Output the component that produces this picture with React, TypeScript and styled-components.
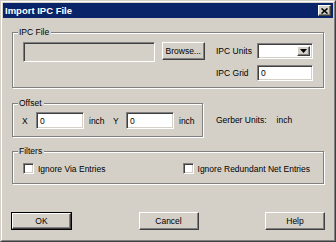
import styled, { createGlobalStyle } from "styled-components";

const GlobalStyle = createGlobalStyle`
  html, body {
    margin: 0;
    padding: 0;
    background: #d4d0c8;
  }

  body {
    font-family: "Liberation Sans", Arial, sans-serif;
    font-size: 8.5px;
    color: #000;
  }
`;

const face = "#d4d0c8";

const Window = styled.div`
  box-sizing: border-box;
  width: 336px;
  height: 242px;
  background: ${face};
  border: 1px solid;
  border-color: ${face} #404040 #404040 ${face};
`;

const Frame = styled.div`
  box-sizing: border-box;
  height: 100%;
  border: 1px solid;
  border-color: #fff #808080 #808080 #fff;
  padding: 1px;
  display: flex;
  flex-direction: column;
`;

const TitleBar = styled.div`
  height: 15px;
  background: #0a246a;
  display: flex;
  align-items: center;
  justify-content: space-between;
  padding: 0 2px 0 2px;
`;

const Title = styled.span`
  color: #fff;
  font-weight: bold;
  font-size: 9.5px;
  line-height: 15px;
`;

const CloseButton = styled.div`
  box-sizing: border-box;
  width: 13px;
  height: 11px;
  background: ${face};
  border: 1px solid;
  border-color: #fff #404040 #404040 #fff;
  box-shadow: inset -1px -1px 0 #808080;
  display: flex;
  align-items: center;
  justify-content: center;

  svg {
    display: block;
  }
`;

const Body = styled.div`
  flex: 1;
  padding: 14px 9px 0 9px;
  display: flex;
  flex-direction: column;
`;

const GroupBox = styled.div<{ $width?: number }>`
  position: relative;
  box-sizing: border-box;
  width: ${({ $width }) => ($width ? `${$width}px` : "auto")};
  border: 1px solid #808080;
  box-shadow: inset 1px 1px 0 #fff, 1px 1px 0 #fff;
`;

const Legend = styled.span`
  position: absolute;
  top: -6px;
  left: 5px;
  padding: 0 2px 0 1px;
  background: ${face};
  line-height: 11px;
`;

const FileGroup = styled(GroupBox)`
  display: flex;
  align-items: flex-start;
  padding: 9px 10px 6px 10px;
`;

const Sunken = styled.div<{ $disabled?: boolean }>`
  box-sizing: border-box;
  background: ${({ $disabled }) => ($disabled ? face : "#fff")};
  border: 1px solid;
  border-color: #808080 #fff #fff #808080;
  box-shadow: inset 1px 1px 0 #404040, inset -1px -1px 0 ${face};
`;

const TextBox = styled(Sunken)<{ $w: number; $h?: number }>`
  width: ${({ $w }) => $w}px;
  height: ${({ $h }) => $h ?? 17}px;
  padding: 0 3px;
  line-height: 14px;
  display: flex;
  align-items: center;
`;

const Button = styled.div<{ $w: number; $h?: number }>`
  box-sizing: border-box;
  width: ${({ $w }) => $w}px;
  height: ${({ $h }) => $h ?? 18}px;
  background: ${face};
  border: 1px solid;
  border-color: #fff #404040 #404040 #fff;
  box-shadow: inset -1px -1px 0 #808080;
  display: flex;
  align-items: center;
  justify-content: center;
`;

const DefaultButton = styled.div`
  box-sizing: border-box;
  width: 61px;
  height: 18px;
  border: 1px solid #000;
  display: flex;

  & > div {
    flex: 1;
    height: auto;
  }
`;

const BrowseButton = styled(Button)`
  margin-left: 7px;
`;

const UnitsGrid = styled.div`
  display: grid;
  grid-template-columns: 41px 56px;
  grid-auto-rows: 16px;
  row-gap: 6px;
  margin-top: 1px;
  margin-left: 11px;
  align-items: center;
`;

const Combo = styled(Sunken)`
  width: 56px;
  height: 16px;
  display: flex;
  justify-content: flex-end;
  padding: 2px;
`;

const DropButton = styled(Button)`
  height: 100%;
`;

const OffsetRow = styled.div`
  display: flex;
  align-items: center;
  margin-top: 15px;
`;

const OffsetGroup = styled(GroupBox)`
  display: flex;
  align-items: center;
  padding: 8px 0 7px 9px;
`;

const AxisLabel = styled.span<{ $w: number }>`
  width: ${({ $w }) => $w}px;
`;

const Unit = styled.span<{ $w?: number }>`
  margin-left: 5px;
  width: ${({ $w }) => ($w ? `${$w}px` : "auto")};
`;

const GerberText = styled.div`
  margin-left: 13px;
  display: flex;
  gap: 10px;
`;

const FilterGroup = styled(GroupBox)`
  margin-top: 14px;
  display: flex;
  justify-content: space-between;
  padding: 11px 13px 9px 10px;
`;

const CheckItem = styled.div`
  display: flex;
  align-items: center;
  gap: 4px;
  height: 11px;
`;

const CheckBox = styled(Sunken)`
  width: 11px;
  height: 11px;
`;

const ButtonRow = styled.div`
  display: flex;
  justify-content: space-between;
  margin: 28px -1px 0 -1px;
`;

function App() {
  return (
    <>
      <GlobalStyle />
      <Window>
        <Frame>
          <TitleBar>
            <Title>Import IPC File</Title>
            <CloseButton>
              <svg width="7" height="6" viewBox="0 0 7 6">
                <path
                  d="M0.5 0.5 L6.5 5.5 M6.5 0.5 L0.5 5.5"
                  stroke="#000"
                  strokeWidth="1.6"
                />
              </svg>
            </CloseButton>
          </TitleBar>

          <Body>
            <FileGroup>
              <Legend>IPC File</Legend>
              <TextBox $w={133} $h={20} $disabled />
              <BrowseButton $w={44} $h={18}>
                Browse...
              </BrowseButton>
              <UnitsGrid>
                <span>IPC Units</span>
                <Combo>
                  <DropButton $w={13}>
                    <svg width="7" height="4" viewBox="0 0 7 4">
                      <path d="M0 0 H7 L3.5 4 Z" fill="#000" />
                    </svg>
                  </DropButton>
                </Combo>
                <span>IPC Grid</span>
                <TextBox $w={56} $h={16}>
                  0
                </TextBox>
              </UnitsGrid>
            </FileGroup>

            <OffsetRow>
              <OffsetGroup $width={191}>
                <Legend>Offset</Legend>
                <AxisLabel $w={14}>X</AxisLabel>
                <TextBox $w={48}>0</TextBox>
                <Unit $w={24}>inch</Unit>
                <AxisLabel $w={13}>Y</AxisLabel>
                <TextBox $w={48}>0</TextBox>
                <Unit>inch</Unit>
              </OffsetGroup>
              <GerberText>
                <span>Gerber Units:</span>
                <span>inch</span>
              </GerberText>
            </OffsetRow>

            <FilterGroup>
              <Legend>Filters</Legend>
              <CheckItem>
                <CheckBox />
                <span>Ignore Via Entries</span>
              </CheckItem>
              <CheckItem>
                <CheckBox />
                <span>Ignore Redundant Net Entries</span>
              </CheckItem>
            </FilterGroup>

            <ButtonRow>
              <DefaultButton>
                <Button $w={59}>OK</Button>
              </DefaultButton>
              <Button $w={60}>Cancel</Button>
              <Button $w={60}>Help</Button>
            </ButtonRow>
          </Body>
        </Frame>
      </Window>
    </>
  );
}

export default App;
